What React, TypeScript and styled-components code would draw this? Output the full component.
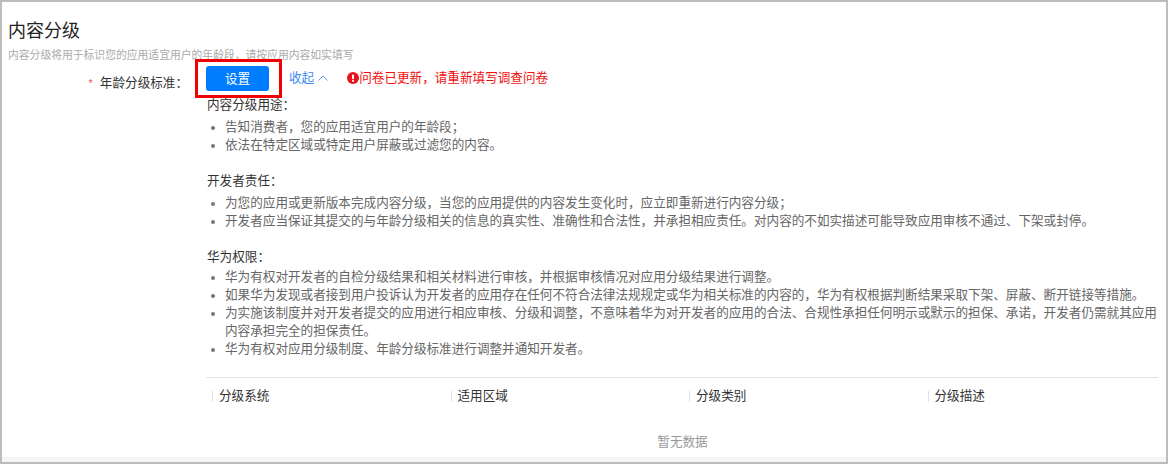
import styled, { createGlobalStyle } from 'styled-components';

const GlobalStyle = createGlobalStyle`
	html, body {
		margin: 0;
		padding: 0;
		background: #fff;
	}
	body {
		font-family: "Liberation Sans", "Noto Sans CJK SC", sans-serif;
	}
`;

const sections = [
	{
		title: '内容分级用途：',
		items: ['告知消费者，您的应用适宜用户的年龄段；', '依法在特定区域或特定用户屏蔽或过滤您的内容。'],
	},
	{
		title: '开发者责任：',
		items: [
			'为您的应用或更新版本完成内容分级，当您的应用提供的内容发生变化时，应立即重新进行内容分级；',
			'开发者应当保证其提交的与年龄分级相关的信息的真实性、准确性和合法性，并承担相应责任。对内容的不如实描述可能导致应用审核不通过、下架或封停。',
		],
	},
	{
		title: '华为权限：',
		items: [
			'华为有权对开发者的自检分级结果和相关材料进行审核，并根据审核情况对应用分级结果进行调整。',
			'如果华为发现或者接到用户投诉认为开发者的应用存在任何不符合法律法规规定或华为相关标准的内容的，华为有权根据判断结果采取下架、屏蔽、断开链接等措施。',
			'为实施该制度并对开发者提交的应用进行相应审核、分级和调整，不意味着华为对开发者的应用的合法、合规性承担任何明示或默示的担保、承诺，开发者仍需就其应用内容承担完全的担保责任。',
			'华为有权对应用分级制度、年龄分级标准进行调整并通知开发者。',
		],
	},
];

const columns = ['分级系统', '适用区域', '分级类别', '分级描述'];

const App = () => {
	return (
		<Frame>
			<GlobalStyle />
			<Panel>
				<Title>内容分级</Title>
				<Subtitle>内容分级将用于标识您的应用适宜用户的年龄段，请按应用内容如实填写</Subtitle>
				<FormRow>
					<Label>
						<Star>*</Star>
						年龄分级标准：
					</Label>
					<Content>
						<Actions>
							<Highlight>
								<SetButton>设置</SetButton>
							</Highlight>
							<Collapse>
								收起
								<svg width='10' height='6' viewBox='0 0 10 6' fill='none'>
									<path d='M0.5 5.5L5 1L9.5 5.5' stroke='#5b9bf5' strokeWidth='1' />
								</svg>
							</Collapse>
							<Warning>
								<svg width='12' height='12' viewBox='0 0 12 12'>
									<circle cx='6' cy='6' r='6' fill='#e8131b' />
									<rect x='5' y='2.4' width='2' height='4.8' rx='0.8' fill='#fff' />
									<rect x='5' y='8' width='2' height='1.8' rx='0.6' fill='#fff' />
								</svg>
								问卷已更新，请重新填写调查问卷
							</Warning>
						</Actions>
						{sections.map(section => (
							<Section key={section.title}>
								<SectionTitle>{section.title}</SectionTitle>
								<BulletList>
									{section.items.map(item => (
										<li key={item}>{item}</li>
									))}
								</BulletList>
							</Section>
						))}
						<TableHead>
							{columns.map(col => (
								<HeadCell key={col}>{col}</HeadCell>
							))}
						</TableHead>
						<Empty>暂无数据</Empty>
					</Content>
				</FormRow>
			</Panel>
		</Frame>
	);
};

export default App;

const Frame = styled.div`
	width: 1168px;
	height: 464px;
	box-sizing: border-box;
	border: 2px solid #bdbdbd;
	background: #f5f5f5;
	overflow: hidden;
`;

const Panel = styled.div`
	height: 455px;
	box-sizing: border-box;
	background: #fff;
	padding: 18px 8px 0 6px;
	overflow: hidden;
`;

const Title = styled.h1`
	margin: 0;
	font-size: 18px;
	line-height: 22px;
	font-weight: 400;
	color: #222;
`;

const Subtitle = styled.p`
	margin: 9px 0 0;
	font-size: 10.8px;
	line-height: 8px;
	color: #aaa;
`;

const FormRow = styled.div`
	display: flex;
`;

const Label = styled.div`
	width: 180px;
	flex-shrink: 0;
	display: flex;
	justify-content: flex-end;
	align-items: baseline;
	padding-top: 15px;
	font-size: 12.6px;
	line-height: 18px;
	color: #333;
`;

const Star = styled.span`
	color: #f0505a;
	margin-right: 7px;
	font-size: 11px;
`;

const Content = styled.div`
	flex: 1;
	min-width: 0;
	margin-left: 19px;
	font-size: 12.6px;
	line-height: 18px;
	color: #666;
`;

const Actions = styled.div`
	display: flex;
	align-items: center;
	height: 37px;
	margin-left: -12px;
`;

const Highlight = styled.div`
	box-sizing: border-box;
	align-self: flex-start;
	flex-shrink: 0;
	width: 87px;
	height: 39px;
	border: 3px solid #f00000;
	padding: 4px 8px;
`;

const SetButton = styled.button`
	display: block;
	width: 63px;
	height: 25px;
	border: none;
	border-radius: 3px;
	background: #007dff;
	color: #fff;
	font: inherit;
	font-size: 12.6px;
	padding: 0;
`;

const Collapse = styled.a`
	display: inline-flex;
	align-items: center;
	gap: 4px;
	margin-left: 7px;
	color: #3f8cf5;
`;

const Warning = styled.div`
	display: inline-flex;
	align-items: center;
	margin-left: 19px;
	color: #f00f0f;
`;

const Section = styled.section`
	margin-bottom: 18px;

	&:last-of-type {
		margin-bottom: 19px;
	}

	&:last-of-type ul {
		margin-top: 2px;
	}
`;

const SectionTitle = styled.div`
	color: #333;
`;

const BulletList = styled.ul`
	margin: 4px 0 0;
	padding: 0 0 0 18px;

	li::marker {
		color: #777;
	}
`;

const TableHead = styled.div`
	display: grid;
	grid-template-columns: repeat(4, 238.5px);
	margin-left: -1px;
	border-top: 1px solid #e2e2e2;
	padding: 13px 0 0 6px;
	height: 26px;
`;

const HeadCell = styled.div`
	border-left: 1px solid #e0e0e0;
	height: 11px;
	padding-left: 6px;
	line-height: 11px;
	color: #333;
	white-space: nowrap;
`;

const Empty = styled.div`
	margin-top: 16px;
	text-align: center;
	color: #999;
`;
